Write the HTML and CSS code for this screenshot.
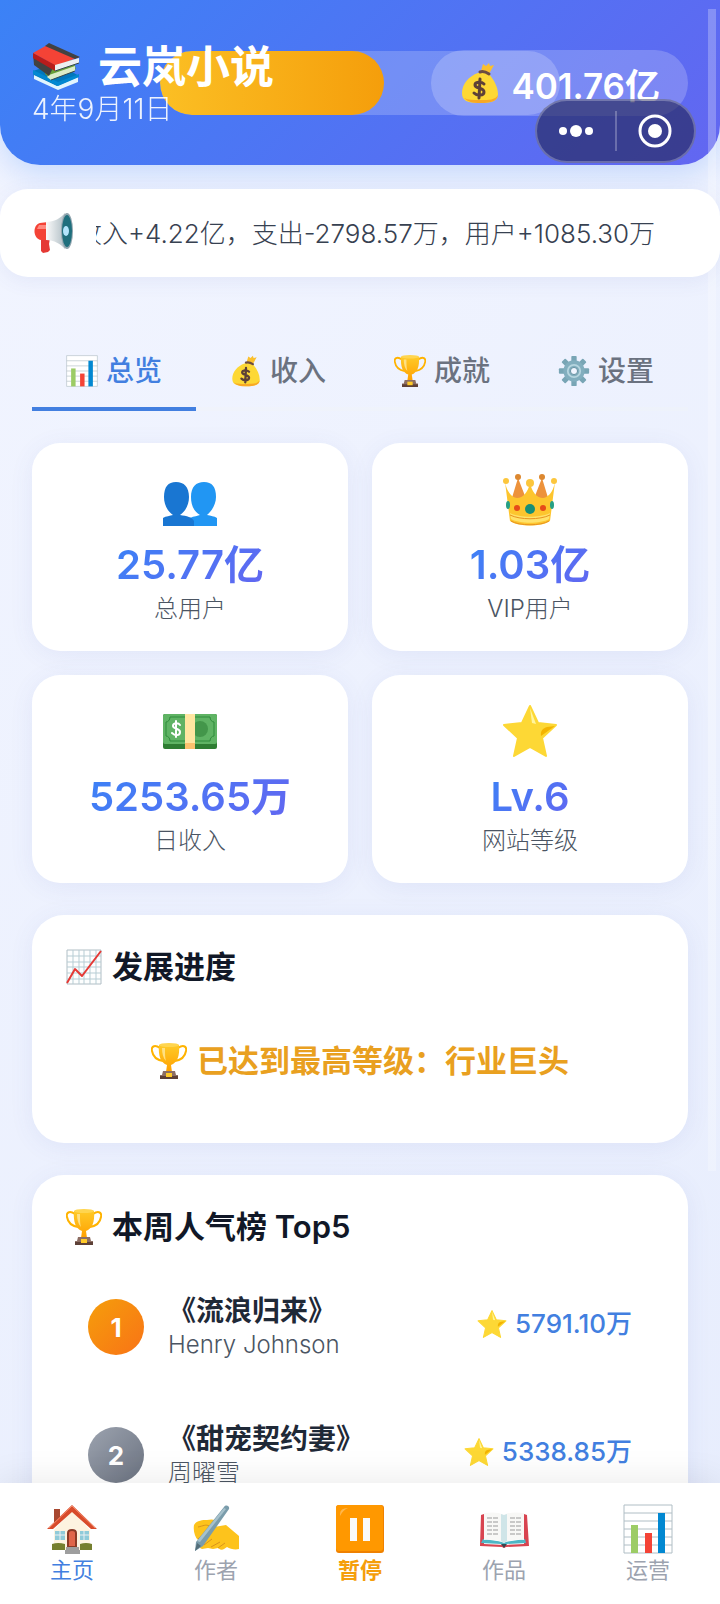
FILE: index.html
```html
<!DOCTYPE html>
<html lang="zh-CN">
<head>
    <meta charset="UTF-8">
    <meta name="viewport" content="width=device-width, initial-scale=1.0">
    <title>云岚小说</title>
    <link rel="stylesheet" href="styles.css">
</head>
<body>
    <!-- shared icons -->
    <svg class="sprite" aria-hidden="true">
        <defs>
            <linearGradient id="gold" x1="0" y1="0" x2="0" y2="1">
                <stop offset="0" stop-color="#ffca28"/>
                <stop offset="1" stop-color="#ffa000"/>
            </linearGradient>
            <linearGradient id="horn" x1="0" y1="0" x2="1" y2="0">
                <stop offset="0" stop-color="#fafafa"/>
                <stop offset="1" stop-color="#b0bec5"/>
            </linearGradient>
        </defs>
        <symbol id="i-books" viewBox="0 0 48 48">
            <path fill="#0277bd" d="M1 28l24-8 22 13-22 11L2 35z"/>
            <path fill="#e1f5fe" d="M2 32l23 11 21-9v5l-20 8L2 36z"/>
            <path fill="#0288d1" d="M1 27l25 12 21-8v3l-21 9L1 31z"/>
            <path fill="#689f38" d="M13 23l28-6 3 9-25 10-6-5z"/>
            <path fill="#dcedc8" d="M17 32l26-9v5l-24 9-4-3z"/>
            <path fill="#424242" d="M1 11l20 14-4 8L2 22z"/>
            <path fill="#f44336" d="M1 10L17 1l30 13-23 9z"/>
            <path fill="#424242" d="M17 0l31 14-5 2L13 3z"/>
            <path fill="#eceff1" d="M23 22l24-7v5l-24 8z"/>
            <path fill="#b71c1c" d="M1 10l22 12v6L1 15z"/>
            <path fill="none" stroke="#37474f" stroke-width="1" d="M23 28l24-8M19 37l24-9"/>
        </symbol>
        <symbol id="i-bag" viewBox="0 0 42 42">
            <path fill="#fbc02d" d="M22 9l2-7 3 2 3-3 1 3 4-1-5 9z"/>
            <path fill="#fdd835" d="M19 11c5-2 9-1 11 1 5 6 9 13 9 20 0 6-4 9-18 9S3 38 3 31C3 22 10 14 19 11z"/>
            <path fill="#f9a825" d="M5 36c4 4 9 5 16 5 12 0 17-2 18-8-3 5-9 5-17 5-7 0-13 0-17-2z"/>
            <path fill="none" stroke="#6d4c41" stroke-width="3" stroke-linecap="round" d="M21 10c3-1 6 0 9 2"/>
            <path fill="none" stroke="#5d4037" stroke-width="3" stroke-linecap="round" d="M25 22c-3-3-9-2-9 1 0 4 9 2 9 7 0 4-7 4-10 1M21 17l-1 19"/>
        </symbol>
        <symbol id="i-horn" viewBox="0 0 42 42">
            <path fill="#e53935" d="M9 26h9l-1 6 1 6-2 2-5 1-2-2z"/>
            <path fill="#f44336" d="M8 11l8-1v18H9C1 27 0 13 8 11z"/>
            <path fill="#ff8a80" d="M7 13h7v4H5z"/>
            <path fill="url(#horn)" d="M14 10c8 0 15-4 19-9v36c-4-5-11-9-19-9z"/>
            <ellipse cx="35" cy="19" rx="6" ry="18" fill="#90a4ae"/>
            <ellipse cx="35" cy="19" rx="5" ry="16" fill="#1f6f7d"/>
            <ellipse cx="34" cy="19" rx="3" ry="5" fill="#b3e5fc"/>
        </symbol>
        <symbol id="i-chart" viewBox="0 0 50 50">
            <path fill="#fff" stroke="#b0bec5" d="M1 1h48v48H1z"/>
            <path fill="none" stroke="#b0bec5" d="M1 9h48M1 17h48M1 25h48M1 33h48M1 41h48"/>
            <path fill="#9ccc65" d="M8 21h7v28H8z"/>
            <path fill="#f44336" d="M22 29h7v20h-7z"/>
            <path fill="#0288d1" d="M35 9h7v40h-7z"/>
        </symbol>
        <symbol id="i-trophy" viewBox="0 0 36 36">
            <path fill="none" stroke="#ffb300" stroke-width="2" d="M9 5C3 1 0 4 1 8c1 6 5 9 11 10M27 5c6-4 9-1 8 3-1 6-5 9-11 10"/>
            <path fill="url(#gold)" d="M8 2h20c1 11-2 18-8 20l1 7h-6l1-7C10 20 7 13 8 2z"/>
            <ellipse cx="18" cy="2" rx="10" ry="2" fill="#ffd54f"/>
            <path fill="#ffe082" d="M11 5h3c0 6 0 9 1 13-3-3-4-8-4-13z"/>
            <path fill="#8d6e63" d="M12 28h12l1 4h2v4H9v-4h2z"/>
            <path fill="#5d4037" d="M9 33h18v3H9z"/>
            <path fill="#ffca28" d="M15 30h6v4h-6z"/>
        </symbol>
        <symbol id="i-gear" viewBox="0 0 36 36">
            <g fill="#78a5b5">
                <rect x="15" y="1" width="6" height="34" rx="1"/>
                <rect x="15" y="1" width="6" height="34" rx="1" transform="rotate(45 18 18)"/>
                <rect x="15" y="1" width="6" height="34" rx="1" transform="rotate(90 18 18)"/>
                <rect x="15" y="1" width="6" height="34" rx="1" transform="rotate(135 18 18)"/>
            </g>
            <circle cx="18" cy="18" r="12" fill="#82aebe"/>
            <circle cx="18" cy="18" r="7" fill="none" stroke="#b6d5df" stroke-width="2"/>
            <circle cx="18" cy="18" r="4" fill="#f1f5ff" stroke="#5c8a9a"/>
        </symbol>
        <symbol id="i-users" viewBox="0 0 56 56">
            <path fill="#2196f3" d="M28 55V47c4-2 8-2 10-3-7-4-9-11-9-18 0-10 5-15 13-15s12 5 12 15c0 7-4 14-9 18 4 1 7 1 10 3v8z"/>
            <path fill="#1976d2" d="M1 55V47c3-2 7-2 10-3-6-4-9-11-9-18 0-10 4-15 12-15s13 5 13 15c0 7-3 14-9 18 7 1 12 2 14 6v5z"/>
        </symbol>
        <symbol id="i-crown" viewBox="0 0 56 56">
            <path fill="#ed923b" d="M16 7l9 23H9zM40 7l7 23H31z"/>
            <circle cx="16" cy="6" r="3" fill="#dc8830"/>
            <circle cx="40" cy="6" r="3" fill="#dc8830"/>
            <path fill="#fdc52e" d="M3 11c2 11 8 16 12 16 6 0 11-6 13-15 2 9 7 15 13 15 4 0 10-5 12-16l-5 39c-8 6-32 6-40 0z"/>
            <path fill="#ffe26b" d="M8 42c10 5 30 5 40 0l-1 6c-9 5-29 5-38 0z"/>
            <path fill="none" stroke="#e8921f" stroke-width="1" d="M8 44c10 5 30 5 40 0M9 50c8 5 30 5 38 0"/>
            <circle cx="4" cy="10" r="3" fill="#fcc63c"/>
            <circle cx="52" cy="10" r="3" fill="#fcc63c"/>
            <circle cx="28" cy="12" r="4" fill="#fcc63c"/>
            <circle cx="28" cy="38" r="5" fill="#168e78"/>
            <circle cx="15" cy="37" r="3" fill="#e64a19"/>
            <circle cx="41" cy="37" r="3" fill="#e64a19"/>
            <ellipse cx="6" cy="34" rx="2" ry="4" fill="#26a085"/>
            <ellipse cx="50" cy="34" rx="2" ry="4" fill="#26a085"/>
        </symbol>
        <symbol id="i-cash" viewBox="0 3 56 56">
            <rect x="1" y="14" width="54" height="35" rx="2" fill="#2e7d32"/>
            <rect x="1" y="14" width="54" height="30" rx="2" fill="#5fb364"/>
            <path fill="none" stroke="#2e8b3a" d="M8 17h40c0 3 2 5 4 5v14c-2 0-4 2-4 5H8c0-3-2-5-4-5V22c2 0 4-2 4-5z"/>
            <circle cx="38" cy="29" r="8" fill="#43964a"/>
            <path fill="#ffe6a1" d="M23 14h10v30H23z"/>
            <path fill="#fbc16d" d="M23 43h10v6H23z"/>
            <path fill="none" stroke="#fff" stroke-width="2" stroke-linecap="round" d="M18 25c-2-3-7-2-7 1s7 2 7 6-5 4-8 1M14 21v16"/>
        </symbol>
        <symbol id="i-star" viewBox="0 0 56 56">
            <path fill="#fdd835" stroke="#fdd835" stroke-width="2" stroke-linejoin="round" d="M28 3l8 17 18 2-14 13 4 18-16-9-16 9 4-18L2 22l18-2z"/>
            <path fill="#fff59d" d="M28 5l6 16-4-1z"/>
            <path fill="#f4b400" d="M53 23L39 33c-1-5 2-8 6-9z"/>
        </symbol>
        <symbol id="i-rise" viewBox="0 0 36 36">
            <path fill="#fdfefe" stroke="#b0bec5" d="M1 1h34v34H1z"/>
            <path fill="none" stroke="#b7cdd4" stroke-width="1" d="M1 7h34M1 13h34M1 18h34M1 24h34M1 30h34M7 1v34M13 1v34M18 1v34M24 1v34M30 1v34"/>
            <path fill="none" stroke="#e53935" stroke-width="2" stroke-linejoin="round" d="M1 34l8-14 7 7L35 2"/>
        </symbol>
        <symbol id="i-house" viewBox="0 0 50 50">
            <path fill="#a84830" d="M7 5h6v14H7z"/>
            <path fill="#fdf3e0" d="M25 7l18 19v20H7V26z"/>
            <path fill="#d84b2b" d="M25 1l25 24h-6L25 8 6 25H0z"/>
            <path fill="none" stroke="#f38b6b" d="M2 24L25 2l23 22"/>
            <path fill="#90cbd9" d="M8 27h10v9H8zM33 27h9v9h-9z"/>
            <path fill="none" stroke="#eceff1" stroke-width="1" d="M13 27v9M8 31h10M37 27v9M33 31h9"/>
            <path fill="#757f2f" d="M5 40q6-2 13 0v6H5zM33 40q6-2 12 0v6H33z"/>
            <path fill="#8b3a26" d="M20 43V29q0-4 5-4t5 4v14z"/>
            <path fill="#e0654a" d="M22 42V29q0-2 3-2t3 2v13z"/>
            <path fill="#9e9e9e" d="M19 43h13v3h1v4H18v-4h1z"/>
        </symbol>
        <symbol id="i-write" viewBox="0 0 50 50">
            <path fill="#fdc31c" d="M3 21c3-5 9-5 13-5 4-1 9-1 9 2 0 2-4 3-7 4l5 1 12-2 13 11v13c-4 1-9 0-12-2l-3 2c-3 2-6-1-6-1l-5 1-5-1-6 1c-4-1-5-5-4-9-3-3-5-9-4-15z"/>
            <path fill="none" stroke="#d9931b" stroke-width="1" d="M7 35c4-4 8-5 11-2M13 41l8-6M20 43l9-5M27 44l7-5M7 23c5-1 8-3 11-1"/>
            <path fill="#7a9cab" d="M33 3c2-3 6-1 5 2L12 42l-8 5 1-9z"/>
            <path fill="#a6c1cc" d="M33 4l2 1L9 38l-3-1z"/>
            <path fill="#546e7a" d="M6 39l4 3-6 5z"/>
        </symbol>
        <symbol id="i-pause" viewBox="0 0 50 50">
            <rect x="1" y="1" width="48" height="48" rx="3" fill="#ef8100"/>
            <rect x="1" y="1" width="47" height="46" rx="3" fill="#ff9800"/>
            <path fill="#ffb74d" d="M5 10q0-6 8-6-5 2-8 8z"/>
            <path fill="#fafafa" d="M15 14h7v23h-7zM28 14h7v23h-7z"/>
        </symbol>
        <symbol id="i-read" viewBox="0 0 50 50">
            <path fill="#d84450" d="M2 11l3-1v30l20 1 20-1V10l3 1 2 31-23 1-2 1-2-1-22-1z"/>
            <path fill="#4db6c5" d="M4 35l21 3 21-3 1 4-20 1-2 2-3-2-20-1z"/>
            <path fill="#f8f8f6" d="M5 9c8-1 15-1 20 2 5-3 12-3 20-2v27c-8-1-15 0-20 3-5-3-12-4-20-3z"/>
            <path fill="#cfe5e8" d="M22 10l3 1 3-1v27l-3 2-3-2z"/>
            <path fill="none" stroke="#9a9a9a" stroke-width="1" stroke-dasharray="5 1" d="M8 14h12M8 18h12M8 22h12M8 26h12M8 30h12M31 14h11M31 18h11M31 22h11M31 26h11M31 30h11"/>
            <path fill="#37474f" d="M22 40h6l-3 4z"/>
        </symbol>
    </svg>

    <div class="app">
        <header class="header">
            <div class="level-bar"><div class="level-fill" style="width: 56%"></div></div>
            <div class="brand">
                <h1><svg class="icon icon-48" aria-hidden="true"><use href="#i-books"/></svg>云岚小说</h1>
                <div class="date">4年9月11日</div>
            </div>
            <div class="money"><svg class="icon icon-42" aria-hidden="true"><use href="#i-bag"/></svg>401.76亿</div>
            <div class="capsule">
                <button aria-label="更多">
                    <svg width="36" height="14" viewBox="0 0 36 14"><g fill="#fff"><circle cx="5" cy="7" r="4"/><circle cx="18" cy="7" r="6"/><circle cx="31" cy="7" r="4"/></g></svg>
                </button>
                <button aria-label="关闭">
                    <svg width="34" height="34" viewBox="0 0 34 34"><circle cx="17" cy="17" r="15" fill="none" stroke="#fff" stroke-width="3"/><circle cx="17" cy="17" r="7" fill="#fff"/></svg>
                </button>
            </div>
        </header>

        <div class="notice">
            <svg class="icon icon-42" aria-hidden="true"><use href="#i-horn"/></svg>
            <div class="notice-view"><div class="notice-text">收入+4.22亿，支出-2798.57万，用户+1085.30万</div></div>
        </div>

        <main class="content">
            <nav class="tabs">
                <button class="tab active"><svg class="icon icon-32" aria-hidden="true"><use href="#i-chart"/></svg>总览</button>
                <button class="tab"><svg class="icon icon-32" aria-hidden="true"><use href="#i-bag"/></svg>收入</button>
                <button class="tab"><svg class="icon icon-32" aria-hidden="true"><use href="#i-trophy"/></svg>成就</button>
                <button class="tab"><svg class="icon icon-32" aria-hidden="true"><use href="#i-gear"/></svg>设置</button>
            </nav>

            <section class="stats">
                <div class="stat">
                    <svg class="icon icon-56" aria-hidden="true"><use href="#i-users"/></svg>
                    <div class="stat-value">25.77亿</div>
                    <div class="stat-label">总用户</div>
                </div>
                <div class="stat">
                    <svg class="icon icon-56" aria-hidden="true"><use href="#i-crown"/></svg>
                    <div class="stat-value">1.03亿</div>
                    <div class="stat-label">VIP用户</div>
                </div>
                <div class="stat">
                    <svg class="icon icon-56" aria-hidden="true"><use href="#i-cash"/></svg>
                    <div class="stat-value">5253.65万</div>
                    <div class="stat-label">日收入</div>
                </div>
                <div class="stat">
                    <svg class="icon icon-56" aria-hidden="true"><use href="#i-star"/></svg>
                    <div class="stat-value">Lv.6</div>
                    <div class="stat-label">网站等级</div>
                </div>
            </section>

            <section class="card">
                <h2><svg class="icon icon-36" aria-hidden="true"><use href="#i-rise"/></svg>发展进度</h2>
                <div class="max-level"><svg class="icon icon-36" aria-hidden="true"><use href="#i-trophy"/></svg>已达到最高等级：行业巨头</div>
            </section>

            <section class="card">
                <h2><svg class="icon icon-36" aria-hidden="true"><use href="#i-trophy"/></svg>本周人气榜 Top5</h2>
                <ol class="rank-list">
                    <li class="rank-item">
                        <span class="rank rank-1">1</span>
                        <div class="book">
                            <div class="book-title">《流浪归来》</div>
                            <div class="book-author">Henry Johnson</div>
                        </div>
                        <div class="score"><svg class="icon icon-30" aria-hidden="true"><use href="#i-star"/></svg>5791.10万</div>
                    </li>
                    <li class="rank-item">
                        <span class="rank rank-2">2</span>
                        <div class="book">
                            <div class="book-title">《甜宠契约妻》</div>
                            <div class="book-author">周曜雪</div>
                        </div>
                        <div class="score"><svg class="icon icon-30" aria-hidden="true"><use href="#i-star"/></svg>5338.85万</div>
                    </li>
                </ol>
            </section>
        </main>

        <nav class="bottom-nav">
            <button class="nav-item active"><svg class="icon icon-50" aria-hidden="true"><use href="#i-house"/></svg>主页</button>
            <button class="nav-item"><svg class="icon icon-50" aria-hidden="true"><use href="#i-write"/></svg>作者</button>
            <button class="nav-item paused"><svg class="icon icon-50" aria-hidden="true"><use href="#i-pause"/></svg>暂停</button>
            <button class="nav-item"><svg class="icon icon-50" aria-hidden="true"><use href="#i-read"/></svg>作品</button>
            <button class="nav-item"><svg class="icon icon-50" aria-hidden="true"><use href="#i-chart"/></svg>运营</button>
        </nav>

        <div class="scroll-thumb"></div>
    </div>
</body>
</html>
```

FILE: styles.css
```css
:root {
    --primary: #3b82f6;
    --secondary: #6366f1;
    --gold: #f59e0b;
    --link: #427fe0;
    --text: #1f2937;
    --muted: #6b7280;
}

* {
    box-sizing: border-box;
    margin: 0;
    padding: 0;
}

body {
    font-family: Inter, "Noto Sans CJK SC", sans-serif;
    color: var(--text);
    background: linear-gradient(135deg, #f2f5ff, #e7edfd);
}

button {
    font: inherit;
    color: inherit;
    background: none;
    border: none;
    cursor: pointer;
}

.sprite {
    position: absolute;
    width: 0;
    height: 0;
}

.icon {
    display: block;
    flex: none;
}

.icon-30 { width: 30px; height: 30px; }
.icon-32 { width: 32px; height: 32px; }
.icon-36 { width: 36px; height: 36px; }
.icon-42 { width: 42px; height: 42px; }
.icon-48 { width: 48px; height: 48px; }
.icon-50 { width: 50px; height: 50px; }
.icon-56 { width: 56px; height: 56px; }

.app {
    position: relative;
    display: flex;
    flex-direction: column;
    height: 100vh;
    overflow: hidden;
}

/* header */
.header {
    position: relative;
    display: flex;
    justify-content: space-between;
    align-items: center;
    flex: none;
    padding: 41px 32px 40px;
    color: white;
    background: linear-gradient(135deg, var(--primary), var(--secondary));
    border-radius: 0 0 40px 40px;
    box-shadow: 0 8px 32px rgba(59, 130, 246, 0.25);
}

.level-bar {
    position: absolute;
    top: 51px;
    left: 50%;
    width: 400px;
    height: 64px;
    transform: translateX(-50%);
    background: rgba(255, 255, 255, 0.2);
    border-radius: 32px;
    overflow: hidden;
}

.level-fill {
    height: 100%;
    background: linear-gradient(90deg, #fbbf24, var(--gold));
    border-radius: 32px;
}

.brand {
    position: relative;
}

h1 {
    display: flex;
    align-items: center;
    gap: 18px;
    font-size: 44px;
    line-height: 52px;
}

.date {
    font-size: 28px;
    font-weight: 300;
    line-height: 32px;
    opacity: 0.9;
}

.money {
    position: relative;
    display: flex;
    align-items: center;
    gap: 10px;
    height: 66px;
    padding: 0 28px;
    font-size: 35px;
    font-weight: 600;
    background: rgba(255, 255, 255, 0.2);
    border-radius: 33px;
}

.capsule {
    position: absolute;
    top: 99px;
    right: 24px;
    display: flex;
    align-items: center;
    width: 161px;
    height: 64px;
    background: rgba(34, 36, 84, 0.62);
    border: 2px solid rgba(255, 255, 255, 0.25);
    border-radius: 32px;
}

.capsule button {
    display: flex;
    justify-content: center;
    align-items: center;
    flex: 1;
    height: 40px;
}

.capsule button + button {
    border-left: 2px solid rgba(255, 255, 255, 0.25);
}

/* news ticker */
.notice {
    position: relative;
    display: flex;
    align-items: center;
    flex: none;
    gap: 22px;
    height: 88px;
    margin-top: 24px;
    padding: 0 32px;
    background: white;
    border-radius: 28px;
    box-shadow: 0 4px 20px rgba(80, 90, 180, 0.08);
}

.notice-view {
    flex: 1;
    padding-top: 2px;
    overflow: hidden;
}

.notice-text {
    margin-left: -20px;
    font-size: 26px;
    font-weight: 300;
    line-height: 40px;
    color: #374151;
    white-space: nowrap;
}

/* main content */
.content {
    display: flex;
    flex-direction: column;
    flex: 1;
    gap: 32px;
    min-height: 0;
    padding: 54px 32px 0;
    overflow: hidden;
}

.content > * {
    flex: none;
}

.tabs {
    display: flex;
}

.tab {
    display: flex;
    justify-content: center;
    align-items: center;
    flex: 1;
    gap: 8px;
    padding: 22px 0 18px;
    font-size: 28px;
    font-weight: 500;
    line-height: 36px;
    color: var(--muted);
    border-bottom: 4px solid rgba(243, 244, 246, 0.3);
}

.tab.active {
    color: var(--link);
    border-color: var(--link);
}

.stats {
    display: grid;
    grid-template-columns: 1fr 1fr;
    gap: 24px;
}

.stat,
.card {
    background: white;
    border-radius: 28px;
    box-shadow: 0 4px 24px rgba(80, 90, 180, 0.08);
}

.stat {
    display: flex;
    flex-direction: column;
    align-items: center;
    padding: 28px 24px 26px;
}

.stat-value {
    margin-top: 10px;
    font-size: 40px;
    font-weight: 600;
    line-height: 56px;
    background: linear-gradient(135deg, var(--primary), var(--secondary));
    -webkit-background-clip: text;
    background-clip: text;
    color: transparent;
}

.stat-label {
    font-size: 24px;
    font-weight: 300;
    line-height: 32px;
    color: #4b5563;
}

.card {
    padding: 32px;
    border-radius: 32px;
}

h2 {
    display: flex;
    align-items: center;
    gap: 10px;
    margin-bottom: 24px;
    padding-left: 2px;
    font-size: 31px;
    font-weight: 600;
    line-height: 40px;
    color: #111827;
}

.max-level {
    display: flex;
    justify-content: center;
    align-items: center;
    gap: 10px;
    padding: 30px 0;
    font-size: 31px;
    font-weight: 600;
    line-height: 40px;
    color: #e9a020;
}

/* ranking */
.rank-list {
    display: flex;
    flex-direction: column;
    gap: 16px;
    list-style: none;
}

.rank-item {
    display: flex;
    align-items: center;
    gap: 24px;
    padding: 22px 24px;
}

.rank {
    display: flex;
    justify-content: center;
    align-items: center;
    width: 56px;
    height: 56px;
    font-size: 26px;
    font-weight: 700;
    color: white;
    border-radius: 50%;
}

.rank-1 {
    background: linear-gradient(135deg, #f59e0b, #f97316);
}

.rank-2 {
    background: linear-gradient(135deg, #9ca3af, #6b7280);
}

.book {
    flex: 1;
}

.book-title {
    font-size: 28px;
    font-weight: 600;
    line-height: 36px;
}

.book-author {
    font-size: 24px;
    font-weight: 300;
    line-height: 32px;
    color: #4b5563;
}

.score {
    display: flex;
    align-items: center;
    gap: 8px;
    padding-bottom: 6px;
    font-size: 26px;
    font-weight: 500;
    line-height: 32px;
    color: var(--link);
}

/* bottom navigation */
.bottom-nav {
    position: relative;
    display: flex;
    flex: none;
    padding: 21px 0 20px;
    background: white;
    box-shadow: 0 -4px 32px rgba(0, 0, 0, 0.08);
}

.nav-item {
    display: flex;
    flex-direction: column;
    align-items: center;
    flex: 1;
    gap: 2px;
    font-size: 22px;
    line-height: 28px;
    color: #9ca3af;
}

.nav-item.active {
    color: var(--link);
}

.nav-item.paused {
    font-weight: 600;
    color: var(--gold);
}

.scroll-thumb {
    position: absolute;
    top: 9px;
    right: 4px;
    bottom: 27%;
    width: 8px;
    background: rgba(255, 255, 255, 0.25);
}
```
